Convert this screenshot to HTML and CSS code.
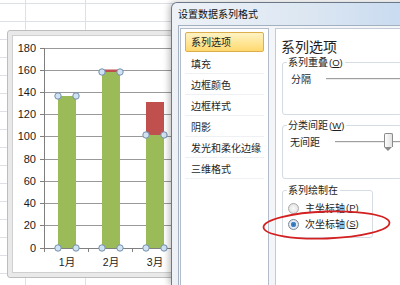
FILE: index.html
```html
<!DOCTYPE html>
<html lang="zh-CN">
<head>
  <meta charset="UTF-8">
  <title>设置数据系列格式</title>
  <link rel="stylesheet" href="styles.css">
</head>
<body>

  <!-- Chart on the sheet -->
  <div class="chart">
    <svg class="plot" width="165" height="238" viewBox="12 35 165 238">
      <rect x="12.5" y="35.5" width="170" height="237" fill="#fff" stroke="#cfcfcf"/>
      <g stroke="#999" stroke-width="1">
        <line x1="44" y1="48.5" x2="180" y2="48.5"/>
        <line x1="44" y1="70.5" x2="180" y2="70.5"/>
        <line x1="44" y1="92.5" x2="180" y2="92.5"/>
        <line x1="44" y1="114.5" x2="180" y2="114.5"/>
        <line x1="44" y1="136.5" x2="180" y2="136.5"/>
        <line x1="44" y1="159.5" x2="180" y2="159.5"/>
        <line x1="44" y1="181.5" x2="180" y2="181.5"/>
        <line x1="44" y1="203.5" x2="180" y2="203.5"/>
        <line x1="44" y1="225.5" x2="180" y2="225.5"/>
      </g>
      <g stroke="#808080" stroke-width="1">
        <line x1="44.5" y1="48" x2="44.5" y2="252"/>
        <line x1="40" y1="248.5" x2="180" y2="248.5"/>
        <line x1="40" y1="48.5" x2="44" y2="48.5"/>
        <line x1="40" y1="70.5" x2="44" y2="70.5"/>
        <line x1="40" y1="92.5" x2="44" y2="92.5"/>
        <line x1="40" y1="114.5" x2="44" y2="114.5"/>
        <line x1="40" y1="136.5" x2="44" y2="136.5"/>
        <line x1="40" y1="159.5" x2="44" y2="159.5"/>
        <line x1="40" y1="181.5" x2="44" y2="181.5"/>
        <line x1="40" y1="203.5" x2="44" y2="203.5"/>
        <line x1="40" y1="225.5" x2="44" y2="225.5"/>
        <line x1="88.5" y1="248" x2="88.5" y2="252"/>
        <line x1="132.5" y1="248" x2="132.5" y2="252"/>
        <line x1="176.5" y1="248" x2="176.5" y2="252"/>
      </g>
      <g class="ylabels" text-anchor="end">
        <text x="36" y="52">180</text>
        <text x="36" y="74">160</text>
        <text x="36" y="96">140</text>
        <text x="36" y="118">120</text>
        <text x="36" y="140">100</text>
        <text x="36" y="163">80</text>
        <text x="36" y="185">60</text>
        <text x="36" y="207">40</text>
        <text x="36" y="229">20</text>
        <text x="36" y="252">0</text>
      </g>
      <!-- secondary series -->
      <rect x="102" y="69.5" width="18" height="3" fill="#c0504d"/>
      <rect x="146" y="102" width="18" height="34" fill="#c0504d"/>
      <!-- primary series -->
      <rect x="58" y="96" width="18" height="152" fill="#9bbb59"/>
      <rect x="102" y="72" width="18" height="176" fill="#9bbb59"/>
      <rect x="146" y="135" width="18" height="113" fill="#9bbb59"/>
      <g class="handles">
        <circle cx="58" cy="96" r="3.2"/>
        <circle cx="76" cy="96" r="3.2"/>
        <circle cx="58" cy="248" r="3.2"/>
        <circle cx="76" cy="248" r="3.2"/>
        <circle cx="102" cy="72" r="3.2"/>
        <circle cx="120" cy="72" r="3.2"/>
        <circle cx="102" cy="248" r="3.2"/>
        <circle cx="120" cy="248" r="3.2"/>
        <circle cx="146" cy="135" r="3.2"/>
        <circle cx="164" cy="135" r="3.2"/>
        <circle cx="146" cy="248" r="3.2"/>
        <circle cx="164" cy="248" r="3.2"/>
      </g>
      <g class="xlabels" text-anchor="middle">
        <text x="67" y="266">1月</text>
        <text x="111" y="266">2月</text>
        <text x="155" y="266">3月</text>
      </g>
    </svg>
  </div>

  <!-- Format dialog -->
  <div class="dialog">
    <div class="title">设置数据系列格式</div>
    <div class="content">
      <ul class="nav">
        <li class="selected">系列选项</li>
        <li>填充</li>
        <li>边框颜色</li>
        <li>边框样式</li>
        <li>阴影</li>
        <li>发光和柔化边缘</li>
        <li>三维格式</li>
      </ul>
      <div class="panel">
        <h2>系列选项</h2>

        <div class="group g1">
          <div class="group-title">系列重叠<span class="key">(<u>O</u>)</span></div>
          <div class="slider-row">
            <span class="lbl">分隔</span>
            <div class="track"></div>
          </div>
        </div>

        <div class="group g2">
          <div class="group-title">分类间距<span class="key">(<u>W</u>)</span></div>
          <div class="slider-row">
            <span class="lbl lbl2">无间距</span>
            <div class="track"><span class="thumb"></span></div>
          </div>
        </div>

        <div class="group g3">
          <div class="group-title">系列绘制在</div>
          <div class="radio-row"><span class="radio"></span>主坐标轴<span class="key">(<u>P</u>)</span></div>
          <div class="radio-row"><span class="radio checked"></span>次坐标轴<span class="key">(<u>S</u>)</span></div>
        </div>
      </div>
    </div>
  </div>

  <!-- hand-drawn highlight -->
  <svg class="mark" width="400" height="285">
    <ellipse cx="326.5" cy="225" rx="63" ry="13.5" fill="none" stroke="#d42020" stroke-width="1.8" transform="rotate(-2 326.5 225)"/>
  </svg>

</body>
</html>
```

FILE: styles.css
```css
body {
  margin: 0;
  width: 400px;
  height: 285px;
  overflow: hidden;
  position: relative;
  font-family: "Noto Sans CJK SC", "Liberation Sans", sans-serif;
  color: #1e1e1e;
  background-color: #fff;
  background-image:
    repeating-linear-gradient(to bottom, transparent 0, transparent 3px, #dde0e4 3px, #dde0e4 4px, transparent 4px, transparent 18px),
    linear-gradient(to right, transparent 25px, #dde0e4 25px, #dde0e4 26px, transparent 26px, transparent 85px, #dde0e4 85px, #dde0e4 86px, transparent 86px);
}

/* chart */
.chart {
  margin: 30px 0 0 7px;
  width: 170px;
  height: 248px;
  box-sizing: border-box;
  border: 1px solid #bdbdbd;
  border-radius: 3px 0 0 3px;
  padding: 4px;
  background: #e9e9e9;
}

.plot {
  display: block;
  overflow: hidden;
}

.ylabels text {
  font-family: "Liberation Sans", sans-serif;
  font-size: 11px;
  fill: #1a1a1a;
}

.xlabels text {
  font-family: "Liberation Sans", "Noto Sans CJK SC", sans-serif;
  font-size: 10.5px;
  fill: #1a1a1a;
}

.handles circle {
  fill: #d3e2f0;
  stroke: #7090b0;
  stroke-width: 1;
}

/* dialog */
.dialog {
  position: absolute;
  left: 171px;
  top: 2px;
  bottom: 0;
  width: 240px;
  box-sizing: border-box;
  display: flex;
  flex-direction: column;
  border: 1px solid #6b7888;
  border-bottom: none;
  border-radius: 6px 0 0 0;
  padding: 0 6px;
  background: linear-gradient(to right, #eef2f7, #dbe6f2 60%, #c7daf0);
  box-shadow: -2px 0 6px rgba(0, 0, 0, 0.25);
}

.title {
  height: 22px;
  line-height: 22px;
  font-size: 10px;
  color: #111;
}

.content {
  flex: 1;
  min-height: 0;
  display: flex;
  gap: 6px;
  padding: 2px 0 0 1px;
  border: 1px solid #a3b0c0;
  border-bottom: none;
  background: #f3f5f8;
}

.nav {
  list-style: none;
  margin: 0;
  width: 89px;
  flex: none;
  box-sizing: border-box;
  padding: 3px 4px;
  border: 1px solid #b2bccb;
  border-bottom: none;
  background: #fff;
}

.nav li {
  height: 21px;
  line-height: 21px;
  box-sizing: border-box;
  padding-left: 6px;
  font-size: 10px;
  white-space: nowrap;
  border-bottom: 1px solid #eef0f3;
}

.nav li.selected {
  height: 20px;
  line-height: 18px;
  margin-bottom: 1px;
  border: 1px solid #dcae4c;
  border-radius: 2px;
  padding-left: 5px;
  background: linear-gradient(#fff3c4, #ffd96e);
}

.panel {
  flex: 1;
  padding: 9px 0 0 5px;
  border: 1px solid #c3cbd6;
  border-bottom: none;
  background: #fff;
}

.panel h2 {
  margin: 0;
  font-size: 14px;
  font-weight: normal;
  line-height: 16px;
}

.group {
  box-sizing: border-box;
  border: 1px solid #d6dce4;
  border-radius: 3px;
  padding: 0 0 0 5px;
  margin-left: 1px;
  font-size: 10px;
  line-height: 12px;
}

.group-title {
  width: fit-content;
  height: 12px;
  margin: -7px 0 0 -1px;
  padding: 0 2px 0 1px;
  background: #fff;
  white-space: nowrap;
}

.key {
  font-family: "Liberation Sans", sans-serif;
  font-size: 9.5px;
  margin-left: 1px;
}

.g1 {
  margin-top: 8px;
  height: 53px;
}

.g2 {
  margin-top: 10px;
  height: 54px;
}

.g3 {
  margin-top: 11px;
  height: 48px;
  width: 91px;
}

.slider-row {
  display: flex;
  align-items: center;
  height: 12px;
  margin-top: 5px;
}

.g2 .slider-row {
  height: 17px;
  margin-top: 2px;
}

.lbl {
  margin-left: 3px;
  margin-right: 15px;
}

.lbl2 {
  margin-left: 2px;
}

.track {
  flex: 1;
  position: relative;
  height: 0;
  border-top: 1px solid #9f9f9f;
  border-bottom: 1px solid #ececec;
}

.thumb {
  position: absolute;
  left: 49px;
  top: -9px;
  width: 7px;
  height: 13px;
  border: 1px solid #8a8a8a;
  border-bottom: none;
  border-radius: 2px 2px 0 0;
  background: linear-gradient(to right, #fdfdfd, #e2e2e2);
}

.thumb::after {
  content: "";
  position: absolute;
  left: -1px;
  top: 13px;
  border-left: 4.5px solid transparent;
  border-right: 4.5px solid transparent;
  border-top: 4px solid #8a8a8a;
}

.radio-row {
  display: flex;
  align-items: center;
  height: 16px;
  white-space: nowrap;
}

.group-title + .radio-row {
  margin-top: 4px;
}

.radio {
  width: 11px;
  height: 11px;
  margin-right: 6px;
  box-sizing: border-box;
  border-radius: 50%;
  border: 1px solid #a8a8a8;
  background: radial-gradient(circle, #fafafa, #dcdcdc);
}

.radio.checked {
  border-color: #7a8797;
  background: radial-gradient(circle, #2c6aa8 0, #4b8fd0 2.5px, #e8eef5 3px, #d9dee5 5px);
}

.mark {
  position: absolute;
  left: 0;
  top: 0;
  pointer-events: none;
}
```
